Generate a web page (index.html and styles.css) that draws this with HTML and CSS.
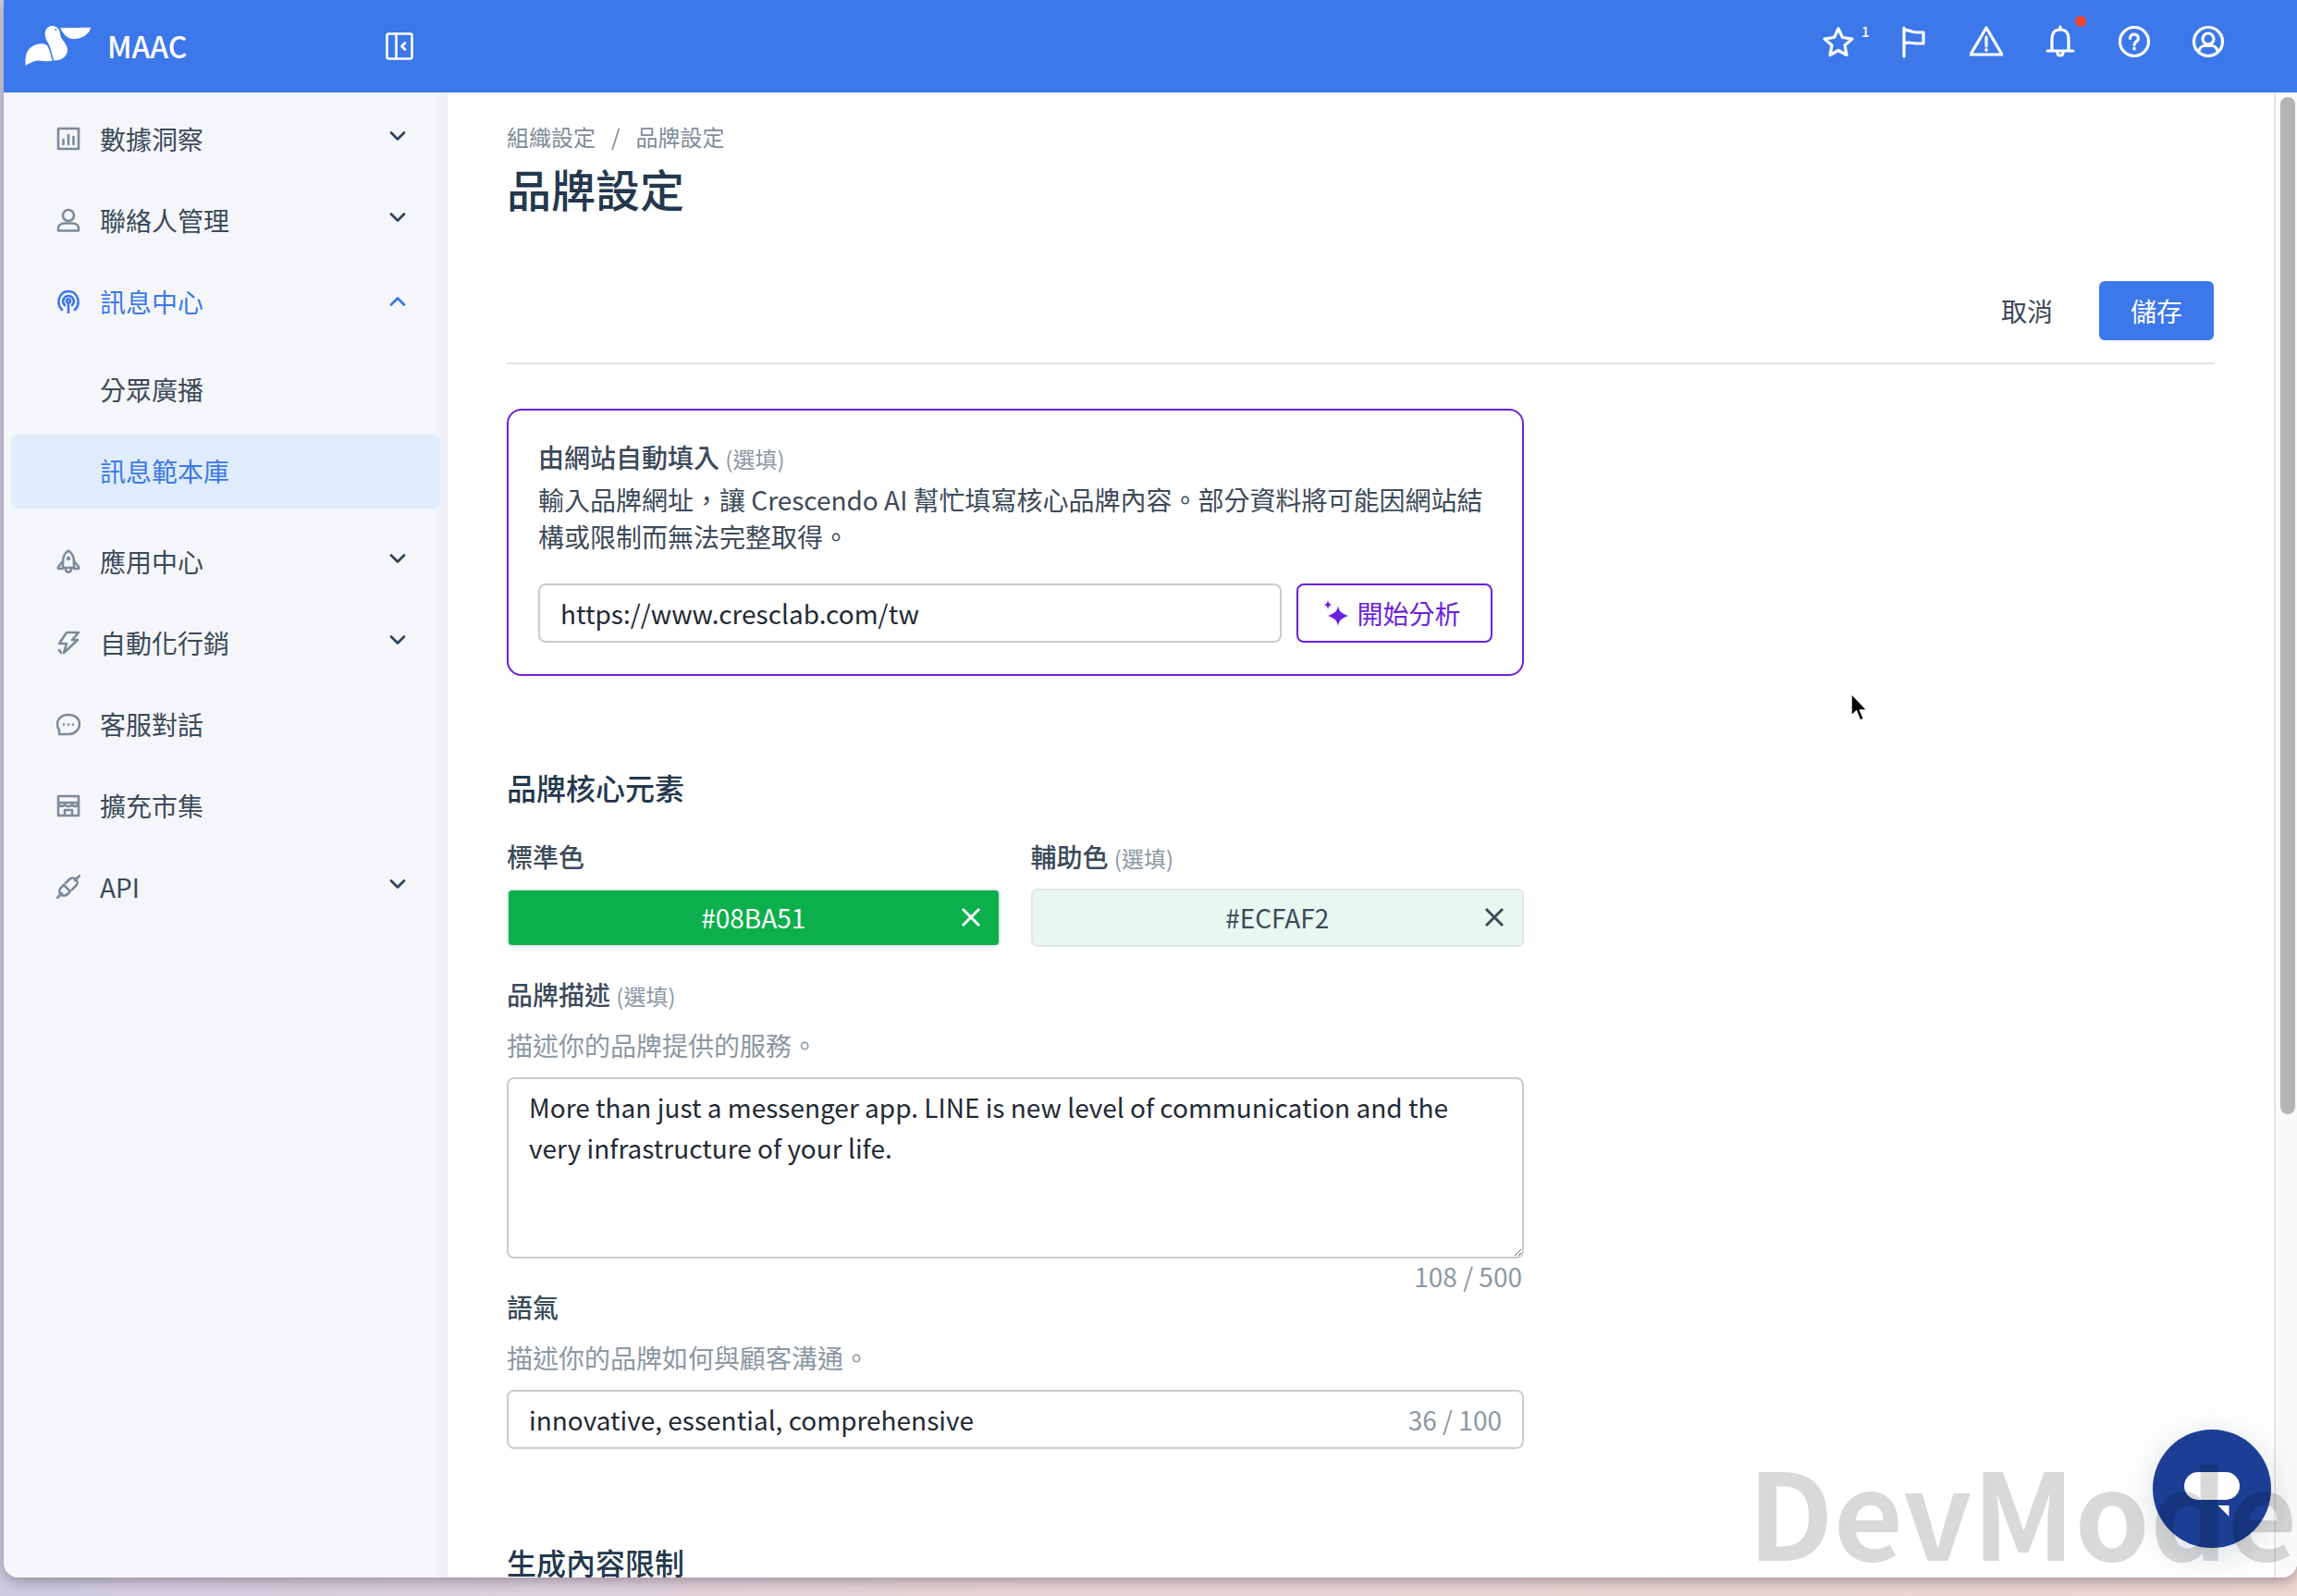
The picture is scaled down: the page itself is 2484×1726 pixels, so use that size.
FILE: index.html
```html
<!DOCTYPE html>
<html lang="zh-Hant">
<head>
    <meta charset="UTF-8">
    <title>品牌設定</title>
    <link rel="stylesheet" href="styles.css">
</head>
<body>
<div class="window">
    <header class="topbar">
        <div class="brand">
            <svg class="logo" viewBox="78 82 216 134" fill="#fff">
                <path d="M80 213C78 190 80 165 100 152C118 140 140 140 150 148C160 165 162 185 168 197C150 203 130 195 118 197C100 200 90 208 80 213Z"/>
                <path d="M143 110C143 92 158 82 172 85C185 88 192 100 192 112C195 130 218 145 216 165C214 185 195 198 172 197C165 175 160 150 150 135C146 127 143 120 143 110Z"/>
                <path d="M192 91L291 90C288 112 262 127 238 127C218 127 205 115 192 91Z"/>
                <circle cx="178" cy="97" r="3" fill="#3d78ea"/>
            </svg>
            <span class="brandName">MAAC</span>
            <svg class="collapse" viewBox="0 0 30 30" fill="none" stroke="#fff" stroke-width="2.6" stroke-linejoin="round" stroke-linecap="round">
                <rect x="1.5" y="1.5" width="27" height="27" rx="2"/>
                <path d="M11.5 1.5V28.5M21 11.5L17.5 15L21 18.5"/>
            </svg>
        </div>
        <div class="topIcons">
            <span class="topIcon">
                <svg viewBox="0 0 36 36"><path d="M18 4L22.500 13.500L33 15L25 22L27 32.500L18 27.500L9 32.500L11 22L3 15L13.500 13.500Z"/></svg>
                <span class="badge">1</span>
            </span>
            <span class="topIcon">
                <svg viewBox="0 0 36 36"><path d="M9 3V34M9 6C14 4 17 8 22 8H30V20H22C17 20 14 18 9 20"/></svg>
            </span>
            <span class="topIcon">
                <svg viewBox="0 0 36 36"><path d="M18 3L35 32H1ZM18 13V23M18 26.500V27.500"/></svg>
            </span>
            <span class="topIcon">
                <svg viewBox="0 0 36 36"><path d="M18 5C11 5 9 10 9 15V28H27V15C27 10 25 5 18 5ZM18 2V5M4 28H32M15 30C15 34 21 34 21 30"/></svg>
                <span class="dot"></span>
            </span>
            <span class="topIcon">
                <svg viewBox="0 0 36 36"><circle cx="18" cy="18" r="15.500"/><path d="M13.500 14.500C13.500 8.500 22.500 9 22.500 14.500C22.500 18 18 18 18 21.500M18 25V26"/></svg>
            </span>
            <span class="topIcon">
                <svg viewBox="0 0 36 36"><circle cx="18" cy="18" r="15.500"/><circle cx="18" cy="15" r="6"/><path d="M7.500 29C9 24 12 22.500 14 22.500H22C24 22.500 27 24 28.500 29"/></svg>
            </span>
        </div>
    </header>
    <div class="content">
        <nav class="sidebar">
            <a class="navItem">
                <svg class="navIcon" viewBox="0 0 26 26"><rect x="2" y="2" width="22" height="22"/><path d="M7.500 19V14M13 19V9M18.500 19V11"/></svg>
                <span class="navText">數據洞察</span>
                <svg class="chevron" viewBox="0 0 18 12"><path d="M2 2.500L9 9.500L16 2.500"/></svg>
            </a>
            <a class="navItem">
                <svg class="navIcon" viewBox="0 0 26 26"><circle cx="13" cy="8" r="6"/><path d="M2 24.500V22C2 18 6 16.500 9 16.500H17C20 16.500 24 18 24 22V24.500Z"/></svg>
                <span class="navText">聯絡人管理</span>
                <svg class="chevron" viewBox="0 0 18 12"><path d="M2 2.500L9 9.500L16 2.500"/></svg>
            </a>
            <a class="navItem open">
                <svg class="navIcon" viewBox="0 0 26 26"><path d="M6 22C-1 15 3 2 13 2C23 2 27 15 20 22"/><path d="M9 17C5 13 8 7 13 7C18 7 21 13 17 17"/><circle cx="13" cy="12.500" r="2"/><path d="M13 15V25"/></svg>
                <span class="navText">訊息中心</span>
                <svg class="chevron" viewBox="0 0 18 12"><path d="M2 9.500L9 2.500L16 9.500"/></svg>
            </a>
            <a class="subItem">分眾廣播</a>
            <a class="subItem active">訊息範本庫</a>
            <a class="navItem afterSub">
                <svg class="navIcon" viewBox="0 0 26 26"><path d="M13 1.500C8 5 7 9 7 13V20H19V13C19 9 18 5 13 1.500Z"/><path d="M7 13L2 19V21H7M19 13L24 19V21H19M10 21C10 26 16 26 16 21"/><circle cx="13" cy="10" r="1"/></svg>
                <span class="navText">應用中心</span>
                <svg class="chevron" viewBox="0 0 18 12"><path d="M2 2.500L9 9.500L16 2.500"/></svg>
            </a>
            <a class="navItem">
                <svg class="navIcon" viewBox="0 0 26 26"><path d="M11 2H24L17 10H23L8 24L11 14H3ZM5 24L3 21"/></svg>
                <span class="navText">自動化行銷</span>
                <svg class="chevron" viewBox="0 0 18 12"><path d="M2 2.500L9 9.500L16 2.500"/></svg>
            </a>
            <a class="navItem">
                <svg class="navIcon" viewBox="0 0 26 26"><path d="M13 3C6 3 1 7 1 13C1 16 2 18 3 19V24H13C20 24 25 19 25 13C25 7 20 3 13 3Z"/><path d="M8 13.500V13.600M13 13.500V13.600M18 13.500V13.600"/></svg>
                <span class="navText">客服對話</span>
            </a>
            <a class="navItem">
                <svg class="navIcon" viewBox="0 0 26 26"><path d="M2 3H24V24H2ZM2 10H24M2 10C2 15 9 15 9 11C9 15 17 15 17 11C17 15 24 15 24 10M9 24V18H17V24"/></svg>
                <span class="navText">擴充市集</span>
            </a>
            <a class="navItem">
                <svg class="navIcon" viewBox="0 0 26 26"><path d="M1 25L6 20M8 11L15 18L12 21C10 23 6 23 4 21C3 19 3 16 5 14ZM25 1L20 6M10 9L14 5C16 3 19 3 21 5C23 7 23 10 21 12L17 16"/></svg>
                <span class="navText">API</span>
                <svg class="chevron" viewBox="0 0 18 12"><path d="M2 2.500L9 9.500L16 2.500"/></svg>
            </a>
        </nav>
        <main class="main">
            <div class="breadcrumb"><span>組織設定</span><span class="sep">/</span><span>品牌設定</span></div>
            <h1 class="pageTitle">品牌設定</h1>
            <div class="actions">
                <button class="cancelBtn">取消</button>
                <button class="saveBtn">儲存</button>
            </div>
            <div class="form">
                <section class="autofill">
                    <div class="fieldLabel">由網站自動填入 <span class="optional">(選填)</span></div>
                    <p class="autofillText">輸入品牌網址&#xFF0C;讓 Crescendo AI 幫忙填寫核心品牌內容。部分資料將可能因網站結構或限制而無法完整取得。</p>
                    <div class="urlRow">
                        <input class="urlInput" value="https://www.cresclab.com/tw">
                        <button class="analyzeBtn">
                            <svg class="sparkle" viewBox="0 0 26 28" fill="#6d1fe0"><path d="M15 6C16 12 18 14 26 17C18 20 16 22 15 28C14 22 12 20 4 17C12 14 14 12 15 6Z"/><path d="M4 0C4.500 3 5.500 4 8 5C5.500 6 4.500 7 4 10C3.500 7 2.500 6 0 5C2.500 4 3.500 3 4 0Z"/></svg>
                            開始分析
                        </button>
                    </div>
                </section>

                <h2 class="sectionTitle">品牌核心元素</h2>
                <div class="colorRow">
                    <div class="colorField">
                        <div class="fieldLabel">標準色</div>
                        <div class="swatch primary">#08BA51
                            <svg class="clear" viewBox="0 0 22 22"><path d="M2 2L20 20M20 2L2 20"/></svg>
                        </div>
                    </div>
                    <div class="colorField">
                        <div class="fieldLabel">輔助色 <span class="optional">(選填)</span></div>
                        <div class="swatch secondary">#ECFAF2
                            <svg class="clear" viewBox="0 0 22 22"><path d="M2 2L20 20M20 2L2 20"/></svg>
                        </div>
                    </div>
                </div>

                <div class="fieldLabel descLabel">品牌描述 <span class="optional">(選填)</span></div>
                <div class="hint">描述你的品牌提供的服務。</div>
                <textarea class="descInput">More than just a messenger app. LINE is new level of communication and the very infrastructure of your life.</textarea>
                <div class="counter">108 / 500</div>

                <div class="fieldLabel toneLabel">語氣</div>
                <div class="hint toneHint">描述你的品牌如何與顧客溝通。</div>
                <div class="toneInput">
                    <input value="innovative, essential, comprehensive">
                    <span class="toneCount">36 / 100</span>
                </div>

                <h2 class="sectionTitle limitTitle">生成內容限制</h2>
            </div>
        </main>
        <div class="scrollbar"><div class="thumb"></div></div>
    </div>
    <div class="watermark">DevMode</div>
    <div class="chatFab">
        <svg viewBox="0 0 60 48" fill="#fff"><rect x="0" y="0" width="60" height="30" rx="15"/><path d="M36.500 36H48.500V48Z"/></svg>
    </div>
    <svg class="cursor" viewBox="0 0 22 32"><path d="M2 1V25L7.500 20L11.500 30L15.500 28.500L11.500 19H19Z" fill="#000" stroke="#fff" stroke-width="1.500"/></svg>
</div>
</body>
</html>
```

FILE: styles.css
```css
*{
    margin: 0;
    padding: 0;
    box-sizing: border-box;
}
body{
    width: 2484px;
    height: 1726px;
    overflow: hidden;
    background: linear-gradient(90deg, #cfcbe0, #e6d4d6 40%, #eed6d0);
    font-family: "Noto Sans CJK TC", "Noto Sans", sans-serif;
    font-size: 28px;
    color: #3c4a59;
}
button, input, textarea{
    font-family: inherit;
    font-size: 28px;
}
.window{
    position: relative;
    margin-left: 4px;
    height: 1706px;
    background: #fff;
    border-radius: 0 0 16px 16px;
    box-shadow: 0 4px 14px rgba(60, 50, 70, 0.4);
    overflow: hidden;
    display: flex;
    flex-direction: column;
}

/* top bar */
.topbar{
    height: 100px;
    flex: none;
    background: #3d78ea;
    display: flex;
    justify-content: space-between;
    color: #fff;
}
.brand{
    width: 480px;
    display: flex;
    align-items: center;
    padding-left: 23px;
}
.logo{
    width: 72px;
    height: 45px;
    margin-top: -1px;
}
.brandName{
    font-size: 32px;
    font-weight: 500;
    margin-left: 17px;
    margin-top: -2px;
}
.collapse{
    width: 30px;
    height: 30px;
    margin-left: 214px;
}
.topIcons{
    display: flex;
    margin-right: 56px;
}
.topIcon{
    position: relative;
    width: 80px;
    height: 90px;
    display: flex;
    align-items: center;
    justify-content: center;
}
.topIcon svg{
    width: 36px;
    height: 36px;
    fill: none;
    stroke: #fff;
    stroke-width: 3.200;
    stroke-linejoin: round;
    stroke-linecap: round;
}
.badge{
    position: absolute;
    left: 65px;
    top: 24px;
    font-size: 15px;
    line-height: 20px;
    font-weight: 500;
}
.dot{
    position: absolute;
    left: 56px;
    top: 17px;
    width: 12px;
    height: 12px;
    border-radius: 50%;
    background: #e8452f;
}

/* sidebar */
.content{
    flex: 1;
    display: flex;
    min-height: 0;
}
.sidebar{
    width: 480px;
    flex: none;
    background: #f5f6fa;
    box-shadow: inset -14px 0 10px -8px rgba(90, 90, 120, 0.07);
    padding-top: 6px;
    padding-right: 8px;
}
.navItem{
    height: 88px;
    display: flex;
    align-items: center;
    padding-left: 54px;
    padding-right: 37px;
}
.navIcon{
    width: 26px;
    height: 26px;
    flex: none;
    margin-right: 21px;
    margin-left: 3px;
    fill: none;
    stroke: #7d8b99;
    stroke-width: 2.600;
    stroke-linejoin: round;
    stroke-linecap: round;
}
.navText{
    flex: 1;
    line-height: 40px;
    margin-top: -1px;
}
.chevron{
    width: 18px;
    height: 12px;
    margin-top: -6px;
    fill: none;
    stroke: #33465a;
    stroke-width: 2.800;
    stroke-linecap: round;
    stroke-linejoin: round;
}
.navItem.open, .navItem.open .navText{
    color: #3d78ea;
}
.open .navIcon, .open .chevron{
    stroke: #3d78ea;
}
.open .chevron{
    margin-top: 0;
}
.subItem{
    display: block;
    height: 80px;
    line-height: 78px;
    margin-left: 8px;
    padding-left: 96px;
    border-radius: 8px;
}
.navItem.open + .subItem{
    margin-top: 12px;
    margin-bottom: 8px;
}
.subItem.active{
    background: #dfecfb;
    color: #3d78ea;
}
.afterSub{
    margin-top: 13px;
}

/* main */
.main{
    flex: 1;
    min-width: 0;
    padding: 32px 65px 0 64px;
    overflow: hidden;
}
.breadcrumb{
    font-size: 24px;
    line-height: 32px;
    color: #7f8c99;
}
.sep{
    margin: 0 17px;
}
.pageTitle{
    margin-top: 9px;
    font-size: 48px;
    line-height: 60px;
    font-weight: 500;
    color: #24384d;
}
.actions{
    margin-top: 71px;
    padding-bottom: 24px;
    border-bottom: 2px solid #e0e3e6;
    display: flex;
    justify-content: flex-end;
    align-items: center;
}
.cancelBtn{
    border: 0;
    background: none;
    color: #3c4a59;
    margin-right: 50px;
}
.saveBtn{
    width: 124px;
    height: 64px;
    border: 0;
    border-radius: 6px;
    background: #3d78ea;
    color: #fff;
}
.form{
    width: 1100px;
    margin-top: 48px;
}
.autofill{
    height: 289px;
    border: 2px solid #6d1fe0;
    border-radius: 16px;
    padding: 30px 32px 0;
}
.fieldLabel{
    height: 40px;
    line-height: 40px;
    font-weight: 500;
    color: #3c4a59;
}
.optional{
    font-size: 24px;
    font-weight: 400;
    color: #8c98a4;
}
.autofillText{
    margin-top: 6px;
    line-height: 40px;
}
.urlRow{
    display: flex;
    gap: 16px;
    margin-top: 31px;
}
.urlInput{
    width: 804px;
    height: 64px;
    padding: 0 22px;
    border: 2px solid #ccc;
    border-radius: 8px;
    color: #1f2a35;
}
.analyzeBtn{
    width: 212px;
    height: 64px;
    border: 2px solid #6d1fe0;
    border-radius: 8px;
    background: #fff;
    color: #6d1fe0;
    display: flex;
    align-items: center;
    justify-content: center;
    gap: 9px;
}
.sparkle{
    width: 26px;
    height: 28px;
    margin-left: -4px;
}
.sectionTitle{
    margin-top: 98px;
    font-size: 32px;
    line-height: 44px;
    font-weight: 500;
    color: #24384d;
}
.colorRow{
    display: flex;
    gap: 33px;
    margin-top: 33px;
}
.colorField{
    flex: 1;
}
.swatch{
    position: relative;
    height: 63px;
    margin-top: 15px;
    border: 2px solid #e2e5ea;
    border-radius: 6px;
    line-height: 59px;
    text-align: center;
}
.swatch.primary{
    background: #0bb04c;
    color: #fff;
    stroke: #fff;
}
.swatch.secondary{
    background: #e8f7f0;
    color: #3c4a59;
    stroke: #3c4a59;
}
.clear{
    position: absolute;
    right: 19px;
    top: 18px;
    width: 22px;
    height: 22px;
    fill: none;
    stroke-width: 3;
}
.descLabel{
    margin-top: 31px;
}
.hint{
    margin-top: 15px;
    line-height: 40px;
    color: #8c98a4;
}
.descInput{
    display: block;
    width: 100%;
    height: 196px;
    margin-top: 15px;
    padding: 8px 22px;
    line-height: 44px;
    border: 2px solid #ccc;
    border-radius: 8px;
    color: #1f2a35;
    resize: vertical;
}
.counter{
    margin-top: 1px;
    padding-right: 2px;
    line-height: 36px;
    text-align: right;
    color: #8c98a4;
}
.toneLabel{
    margin-top: -5px;
}
.toneHint{
    margin-top: 15px;
}
.toneInput{
    display: flex;
    align-items: center;
    height: 64px;
    margin-top: 15px;
    padding: 0 22px;
    border: 2px solid #ccc;
    border-radius: 8px;
}
.toneInput input{
    flex: 1;
    border: 0;
    color: #1f2a35;
}
.toneCount{
    color: #8c98a4;
}
.limitTitle{
    margin-top: 100px;
}
.scrollbar{
    width: 25px;
    flex: none;
    background: #fafafa;
    border-left: 2px solid #e4e4e4;
    padding: 5px 2px 0 5px;
}
.thumb{
    height: 1100px;
    border-radius: 8px;
    background: #b4b4b4;
}

/* things on top of the page */
.watermark{
    position: absolute;
    left: 1886px;
    top: 1541px;
    font-size: 130px;
    line-height: 180px;
    font-weight: 700;
    color: rgba(0, 0, 0, 0.15);
    white-space: nowrap;
    z-index: 3;
}
.chatFab{
    position: absolute;
    left: 2324px;
    top: 1546px;
    width: 128px;
    height: 128px;
    border-radius: 50%;
    background: #1c3f95;
    box-shadow: 0 8px 40px rgba(30, 60, 90, 0.18);
    display: flex;
    align-items: center;
    justify-content: center;
    z-index: 2;
}
.chatFab svg{
    width: 60px;
    height: 48px;
    margin-top: 12px;
}
.cursor{
    position: absolute;
    left: 1996px;
    top: 749px;
    width: 22px;
    height: 32px;
    z-index: 4;
}
```
